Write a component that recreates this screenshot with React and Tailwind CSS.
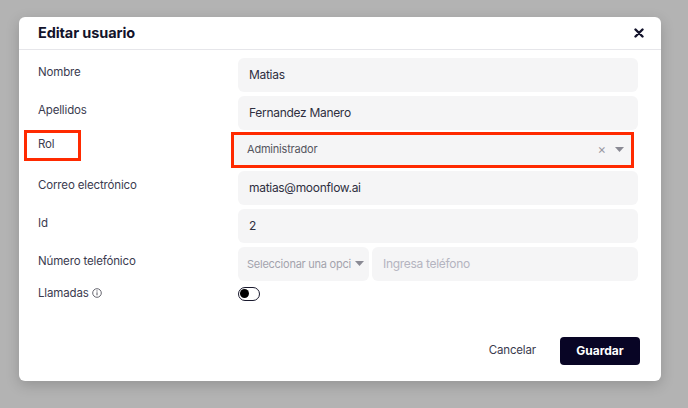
import React, { useState } from "react";

const font = { fontFamily: "Inter, 'Noto Sans', sans-serif" };

function Label({ children, boxed }) {
  if (boxed) {
    return (
      <div className="w-[200px] shrink-0 pt-[6px]">
        <div className="-ml-[14px] -mt-[10px] flex h-[31px] w-[57px] items-center border-[3px] border-[#ff2a00] pl-[11px] text-[11.5px] tracking-[-0.15px] text-[#3b3b4f]">
          {children}
        </div>
      </div>
    );
  }
  return (
    <div className="w-[200px] shrink-0 pt-[6px] text-[11.5px] tracking-[-0.15px] text-[#3b3b4f]">{children}</div>
  );
}

function TextInput({ value, placeholder }) {
  return (
    <div className="flex h-[34px] flex-1 items-center rounded-[6px] bg-[#f5f5f6] px-[11px] text-[12px] tracking-[-0.3px]">
      {value ? (
        <span className="text-[#2f2f3f]">{value}</span>
      ) : (
        <span className="text-[#b4b4c0]">{placeholder}</span>
      )}
    </div>
  );
}

function Caret() {
  return (
    <svg width="9" height="5" viewBox="0 0 9 5" className="shrink-0">
      <path d="M0 0h9L4.5 5z" fill="#8a8a94" />
    </svg>
  );
}

export default function App() {
  const [calls, setCalls] = useState(false);

  return (
    <div className="h-[408px] w-[688px] bg-[#b3b3b3] pl-[19px] pt-[17px]" style={font}>
      <div className="flex h-[364px] w-[642px] flex-col rounded-[6px] bg-white shadow-[0_4px_14px_rgba(0,0,0,0.18)]">
        <div className="flex h-[33px] items-center justify-between border-b border-[#e6e6ea] pl-[19px] pr-[17px]">
          <h2 className="text-[14.5px] font-bold tracking-[-0.1px] text-[#13132b]">Editar usuario</h2>
          <button className="text-[#13132b]">
            <svg width="10" height="10" viewBox="0 0 10 10">
              <path d="M1.5 1.5l7 7M8.5 1.5l-7 7" stroke="#13132b" strokeWidth="2.4" strokeLinecap="round" />
            </svg>
          </button>
        </div>

        <div className="flex flex-col gap-[3.8px] pl-[19px] pr-[23px] pt-[8px]">
          <div className="flex">
            <Label>Nombre</Label>
            <TextInput value="Matias" />
          </div>
          <div className="flex">
            <Label>Apellidos</Label>
            <TextInput value="Fernandez Manero" />
          </div>
          <div className="flex h-[34px]">
            <Label boxed>Rol</Label>
            <div className="-ml-[7px] -mt-[2px] mr-[4px] flex h-[36px] flex-1 items-center border-[3px] border-[#ff2a00] bg-[#f5f5f6] pl-[13px] pr-[7px] text-[11px] tracking-[-0.2px] text-[#55555f]">
              <span className="flex-1">Administrador</span>
              <span className="mr-[9px] text-[13px] leading-none text-[#9a9aa4]">×</span>
              <Caret />
            </div>
          </div>
          <div className="flex">
            <Label>Correo electrónico</Label>
            <TextInput value="matias@moonflow.ai" />
          </div>
          <div className="flex">
            <Label>Id</Label>
            <TextInput value="2" />
          </div>
          <div className="flex">
            <Label>Número telefónico</Label>
            <div className="flex flex-1 gap-[3px]">
              <div className="flex h-[34px] w-[131px] items-center gap-[4px] rounded-[6px] bg-[#f5f5f6] pl-[9px] pr-[10px] text-[11px] tracking-[-0.25px] text-[#a3a3ad]">
                <span className="whitespace-nowrap">Seleccionar una opci</span>
                <Caret />
              </div>
              <TextInput placeholder="Ingresa teléfono" />
            </div>
          </div>
          <div className="flex">
            <div className="flex w-[200px] shrink-0 items-center gap-[3px] text-[11.5px] tracking-[-0.15px] text-[#3b3b4f]">
              Llamadas
              <svg width="10" height="10" viewBox="0 0 10 10">
                <circle cx="5" cy="5" r="4.3" fill="none" stroke="#55555f" strokeWidth="0.9" />
                <path d="M5 4.3v3" stroke="#55555f" strokeWidth="1" />
                <circle cx="5" cy="2.9" r="0.6" fill="#55555f" />
              </svg>
            </div>
            <button
              onClick={() => setCalls(!calls)}
              className="mt-[2px] flex h-[14px] w-[22px] items-center rounded-full border-[1.5px] border-[#1a1a2e] bg-white px-[1px]"
            >
              <span className={`h-[9px] w-[9px] rounded-full bg-black ${calls ? "ml-auto" : ""}`} />
            </button>
          </div>
        </div>

        <div className="mt-auto flex items-center justify-end gap-[24px] pb-[16px] pr-[21px]">
          <button className="text-[11.5px] tracking-[-0.15px] text-[#3b3b4f]">Cancelar</button>
          <button className="h-[28px] w-[80px] rounded-[4px] bg-[#080525] text-[12px] font-bold text-white">
            Guardar
          </button>
        </div>
      </div>
    </div>
  );
}
